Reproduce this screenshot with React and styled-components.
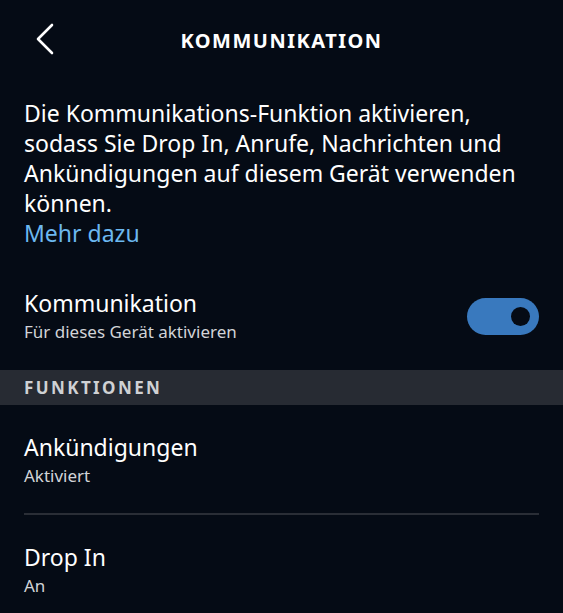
import styled, { createGlobalStyle } from "styled-components"

const GlobalStyle = createGlobalStyle`
  html, body {
    margin: 0;
    padding: 0;
    background: #050b15;
  }
  body {
    font-family: "Noto Sans", "Liberation Sans", sans-serif;
    color: #ffffff;
  }
`;

const Page = styled.div`
  width: 563px;
  min-height: 613px;
  background: #050b15;
  overflow: hidden;
`;

const Header = styled.header`
  position: relative;
  height: 80px;
  display: flex;
  align-items: center;
  justify-content: center;
`;

const BackButton = styled.button`
  position: absolute;
  left: 33px;
  top: 22px;
  width: 24px;
  height: 34px;
  padding: 0;
  border: 0;
  background: none;
  display: flex;
  align-items: center;
  justify-content: center;
  svg {
    display: block;
  }
`;

const Title = styled.h1`
  margin: 0;
  font-size: 20px;
  font-weight: 700;
  letter-spacing: 1.5px;
  color: #ffffff;
`;

const Intro = styled.p`
  margin: 0;
  padding: 18px 24px 0;
  font-size: 23px;
  line-height: 30px;
  color: #ffffff;
`;

const MoreLink = styled.a`
  display: block;
  color: #6cb8f0;
  text-decoration: none;
`;

const SettingRow = styled.div`
  display: flex;
  align-items: center;
  justify-content: space-between;
  padding: 40px 24px 0;
`;

const RowText = styled.div`
  display: flex;
  flex-direction: column;
`;

const RowTitle = styled.div`
  font-size: 23px;
  line-height: 30px;
  color: #ffffff;
`;

const RowSub = styled.div`
  margin-top: 2px;
  font-size: 17px;
  line-height: 24px;
  color: #d2d4d8;
`;

const Toggle = styled.div`
  width: 72px;
  height: 37px;
  border-radius: 19px;
  background: #3979be;
  display: flex;
  align-items: center;
  justify-content: ${p => (p.$on ? "flex-end" : "flex-start")};
  padding: 0 9px;
  box-sizing: border-box;
`;

const Knob = styled.span`
  width: 19px;
  height: 19px;
  border-radius: 50%;
  background: #050b15;
`;

const SectionBand = styled.div`
  margin-top: 26px;
  height: 35px;
  background: #272b33;
  display: flex;
  align-items: center;
  padding: 0 24px;
  font-size: 17px;
  font-weight: 700;
  letter-spacing: 2.4px;
  color: #cfd1d4;
`;

const List = styled.div`
  padding: 0 24px;
`;

const ListItem = styled.div`
  padding: 27px 0 25px;
  border-bottom: ${p => (p.$last ? "none" : "2px solid #2a2e36")};
`;

function Chevron() {
  return (
    <svg width="20" height="32" viewBox="0 0 20 32" fill="none">
      <path d="M17 2 L3 16 L17 30" stroke="#ffffff" strokeWidth="2.6" strokeLinecap="round" strokeLinejoin="round" />
    </svg>
  );
}

export default function App() {
  return (
    <Page>
      <GlobalStyle />
      <Header>
        <BackButton aria-label="Zurück"><Chevron /></BackButton>
        <Title>KOMMUNIKATION</Title>
      </Header>
      <Intro>
        Die Kommunikations-Funktion aktivieren, sodass Sie Drop In, Anrufe, Nachrichten und Ankündigungen auf diesem Gerät verwenden können.
        <MoreLink href="#">Mehr dazu</MoreLink>
      </Intro>
      <SettingRow>
        <RowText>
          <RowTitle>Kommunikation</RowTitle>
          <RowSub>Für dieses Gerät aktivieren</RowSub>
        </RowText>
        <Toggle $on><Knob /></Toggle>
      </SettingRow>
      <SectionBand>FUNKTIONEN</SectionBand>
      <List>
        <ListItem>
          <RowTitle>Ankündigungen</RowTitle>
          <RowSub>Aktiviert</RowSub>
        </ListItem>
        <ListItem $last>
          <RowTitle>Drop In</RowTitle>
          <RowSub>An</RowSub>
        </ListItem>
      </List>
    </Page>
  );
}
